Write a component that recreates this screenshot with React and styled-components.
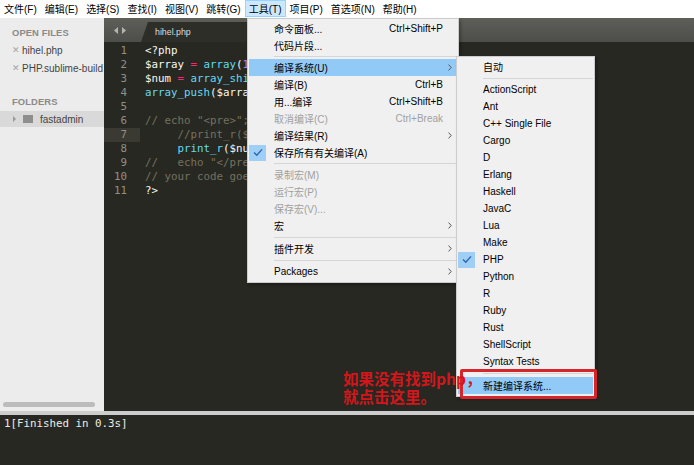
import React from 'react';
import styled, { createGlobalStyle, css } from 'styled-components';

const Global = createGlobalStyle`
  html, body { margin: 0; padding: 0; background: #272822; }
  body {
    width: 694px; height: 465px; overflow: hidden;
    font-family: "Liberation Sans", "Noto Sans CJK SC", sans-serif;
  }
`;

const UI = `"Liberation Sans", "Noto Sans CJK SC", sans-serif`;
const MONO = `"DejaVu Sans Mono", "Liberation Mono", monospace`;

const Window = styled.div`
  position: relative;
  width: 694px;
  height: 465px;
  display: flex;
  flex-direction: column;
  overflow: hidden;
  background: #272822;
`;

/* ---------- menu bar ---------- */
const MenuBar = styled.div`
  height: 18px;
  flex: none;
  background: #ffffff;
  display: flex;
  align-items: flex-start;
  font-family: ${UI};
  font-size: 10px;
  color: #000;
`;
const MenuBarItem = styled.div`
  height: 17px;
  box-sizing: border-box;
  padding: 0 3px;
  border: 1px solid transparent;
  display: flex;
  align-items: center;
  white-space: nowrap;
  ${p => p.$active && css`
    background: #cce8ff;
    border-color: #99d1ff;
  `}
`;

/* ---------- main ---------- */
const Main = styled.div`
  height: 393px;
  flex: none;
  display: flex;
`;

const Sidebar = styled.div`
  width: 104px;
  flex: none;
  background: #ececec;
  display: flex;
  flex-direction: column;
  font-family: ${UI};
  font-size: 10px;
  color: #444;
`;
const SectionTitle = styled.div`
  height: 16px;
  line-height: 16px;
  margin-top: ${p => p.$mt}px;
  padding-left: 12px;
  font-size: 9.4px;
  font-weight: bold;
  color: #8a8a8a;
  letter-spacing: 0.1px;
`;
const FileRow = styled.div`
  height: 18px;
  display: flex;
  align-items: center;
  padding-left: 12px;
  white-space: nowrap;
`;
const CloseX = styled.span`
  width: 10px;
  color: #a5a5a5;
  font-size: 9px;
`;
const FolderRow = styled.div`
  height: 16px;
  margin-top: 1px;
  background: #d9d9d9;
  display: flex;
  align-items: center;
  padding-left: 12px;
`;
const FolderName = styled.span`
  margin-left: 7px;
  color: #444;
`;
const SideScroll = styled.div`
  margin: auto 9px 4px 3px;
  height: 5px;
  border-radius: 3px;
  background: #bcbcbc;
`;

const Editor = styled.div`
  flex: 1;
  display: flex;
  flex-direction: column;
  background: #272822;
`;
const TabBar = styled.div`
  height: 24px;
  flex: none;
  background: linear-gradient(#5f5f5a, #4d4d49);
  display: flex;
  align-items: flex-end;
`;
const TabArrows = styled.div`
  width: 37px;
  height: 24px;
  display: flex;
  align-items: center;
  justify-content: center;
  gap: 4px;
  padding-right: 6px;
  box-sizing: border-box;
`;
const Tab = styled.div`
  width: 118px;
  height: 20px;
  background: #2d2e28;
  clip-path: polygon(7px 0, 111px 0, 118px 100%, 0 100%);
  display: flex;
  align-items: center;
  padding-left: 14px;
  box-sizing: border-box;
  font-family: ${UI};
  font-size: 8.8px;
  color: #dcdcdc;
`;
const Code = styled.div`
  flex: 1;
  padding-top: 2px;
  font-family: ${MONO};
  font-size: 10.8px;
`;
const Line = styled.div`
  height: 14px;
  line-height: 14px;
  display: flex;
`;
const Gutter = styled.div`
  width: 36px;
  flex: none;
  box-sizing: border-box;
  padding-right: 13px;
  text-align: right;
  color: #8f908a;
  background: ${p => (p.$active ? '#3a3a33' : 'transparent')};
`;
const CodeText = styled.div`
  padding-left: 5px;
  white-space: pre;
  color: #f8f8f2;
`;
const Tok = styled.span`
  color: ${p => ({ k: '#f92672', f: '#66d9ef', n: '#ae81ff', c: '#75715e', s: '#e6db74' }[p.$t] || '#f8f8f2')};
`;

const Splitter = styled.div`
  height: 4px;
  flex: none;
  background: #cdcdcd;
`;
const Output = styled.div`
  flex: 1;
  background: #272822;
  padding: 2px 4px;
  font-family: ${MONO};
  font-size: 10.8px;
  line-height: 14px;
  color: #ecece6;
  white-space: pre;
`;

/* ---------- menus (overlays) ---------- */
const Menu = styled.div`
  position: absolute;
  left: ${p => p.$left}px;
  top: ${p => p.$top}px;
  width: ${p => p.$width}px;
  box-sizing: border-box;
  padding: ${p => p.$pt}px 1px 2px 1px;
  background: #f0f0f0;
  border: 1px solid #cccccc;
  box-shadow: 2px 2px 3px rgba(0, 0, 0, 0.28);
  font-family: ${UI};
  font-size: 10px;
  color: #000;
  z-index: ${p => p.$z};
`;
const Item = styled.div`
  height: 17px;
  display: grid;
  grid-template-columns: 25px 1fr auto 14px;
  align-items: center;
  white-space: nowrap;
  color: ${p => (p.$disabled ? '#a0a0a0' : '#000')};
  background: ${p => (p.$hl ? '#91c9f7' : 'transparent')};
`;
const CheckCell = styled.div`
  height: 17px;
  display: flex;
  align-items: center;
`;
const CheckBox = styled.div`
  width: 17px;
  height: 16px;
  background: #9fcff5;
  display: flex;
  align-items: center;
  justify-content: center;
`;
const Shortcut = styled.div`
  text-align: right;
`;
const ArrowCell = styled.div`
  display: flex;
  align-items: center;
  padding-left: 5px;
`;
const Sep = styled.div`
  height: ${p => p.$h}px;
  display: flex;
  align-items: center;
  padding-left: 25px;
  &::after {
    content: '';
    flex: 1;
    height: 1px;
    background: #d5d5d5;
  }
`;

const Annotation = styled.div`
  position: absolute;
  left: 343px;
  top: 369px;
  font-family: "Noto Sans CJK SC", sans-serif;
  font-weight: bold;
  font-size: 15.5px;
  line-height: 18px;
  color: #d3161b;
  white-space: pre;
  z-index: 10;
`;
const RedBox = styled.div`
  position: absolute;
  left: 460px;
  top: 369px;
  width: 137px;
  height: 30px;
  box-sizing: border-box;
  border: 3px solid #d6262b;
  border-radius: 2px;
  z-index: 9;
`;

const Check = () => (
  <CheckBox>
    <svg width="10" height="9" viewBox="0 0 10 9">
      <path d="M1 4.6 L3.8 7.3 L9 1.4" fill="none" stroke="#2a66b8" strokeWidth="1.4" />
    </svg>
  </CheckBox>
);

const Chevron = () => (
  <svg width="4" height="7" viewBox="0 0 4 7">
    <path d="M0.6 0.6 L3.2 3.5 L0.6 6.4" fill="none" stroke="#555" strokeWidth="1" />
  </svg>
);

const MenuItem = ({ label, shortcut, sub, checked, disabled, hl }) => (
  <Item $disabled={disabled} $hl={hl}>
    <CheckCell>{checked && <Check />}</CheckCell>
    <div>{label}</div>
    <Shortcut>{shortcut}</Shortcut>
    <ArrowCell>{sub && <Chevron />}</ArrowCell>
  </Item>
);

const menuBarItems = ['文件(F)', '编辑(E)', '选择(S)', '查找(I)', '视图(V)', '跳转(G)', '工具(T)', '项目(P)', '首选项(N)', '帮助(H)'];

/* only the part of each line that is visible left of the open menu */
const codeLines = [
  [['t', '<?php']],
  [['t', '$array '], ['k', '='], ['t', ' '], ['f', 'array'], ['t', '('], ['n', '1']],
  [['t', '$num '], ['k', '='], ['t', ' '], ['f', 'array_shi']],
  [['f', 'array_push'], ['t', '($arra']],
  [],
  [['c', '// echo "<pre>";']],
  [['c', '     //print_r($']],
  [['t', '     '], ['f', 'print_r'], ['t', '($nu']],
  [['c', '//   echo "</pre']],
  [['c', '// your code goe']],
  [['t', '?>']],
];

const toolsMenu = [
  { label: '命令面板...', shortcut: 'Ctrl+Shift+P' },
  { label: '代码片段...' },
  { sep: 5 },
  { label: '编译系统(U)', sub: true, hl: true },
  { label: '编译(B)', shortcut: 'Ctrl+B' },
  { label: '用...编译', shortcut: 'Ctrl+Shift+B' },
  { label: '取消编译(C)', shortcut: 'Ctrl+Break', disabled: true },
  { label: '编译结果(R)', sub: true },
  { label: '保存所有有关编译(A)', checked: true },
  { sep: 5 },
  { label: '录制宏(M)', disabled: true },
  { label: '运行宏(P)', disabled: true },
  { label: '保存宏(V)...', disabled: true },
  { label: '宏', sub: true },
  { sep: 6 },
  { label: '插件开发', sub: true },
  { sep: 6 },
  { label: 'Packages', sub: true },
];

const buildMenu = [
  { label: '自动' },
  { sep: 6 },
  ...['ActionScript', 'Ant', 'C++ Single File', 'Cargo', 'D', 'Erlang', 'Haskell', 'JavaC', 'Lua', 'Make'].map(l => ({ label: l })),
  { label: 'PHP', checked: true },
  ...['Python', 'R', 'Ruby', 'Rust', 'ShellScript', 'Syntax Tests'].map(l => ({ label: l })),
  { sep: 7 },
  { label: '新建编译系统...', hl: true },
];

const renderMenu = items =>
  items.map((it, i) => (it.sep ? <Sep key={i} $h={it.sep} /> : <MenuItem key={i} {...it} />));

export default function App() {
  return (
    <>
      <Global />
      <Window>
        <MenuBar>
          {menuBarItems.map(m => (
            <MenuBarItem key={m} $active={m === '工具(T)'}>{m}</MenuBarItem>
          ))}
        </MenuBar>

        <Main>
          <Sidebar>
            <SectionTitle $mt={7}>OPEN FILES</SectionTitle>
            <FileRow><CloseX>✕</CloseX>hihel.php</FileRow>
            <FileRow><CloseX>✕</CloseX>PHP.sublime-build</FileRow>
            <SectionTitle $mt={17}>FOLDERS</SectionTitle>
            <FolderRow>
              <svg width="11" height="8" viewBox="0 0 11 8">
                <path d="M1 1 L4 4 L1 7 Z" fill="#9a9a9a" />
              </svg>
              <svg width="10" height="8" viewBox="0 0 10 8">
                <rect x="0" y="0" width="10" height="8" fill="#8e8e8e" />
              </svg>
              <FolderName>fastadmin</FolderName>
            </FolderRow>
            <SideScroll />
          </Sidebar>

          <Editor>
            <TabBar>
              <TabArrows>
                <svg width="4" height="7" viewBox="0 0 4 7"><path d="M4 0 L0 3.5 L4 7 Z" fill="#b5b5b0" /></svg>
                <svg width="4" height="7" viewBox="0 0 4 7"><path d="M0 0 L4 3.5 L0 7 Z" fill="#b5b5b0" /></svg>
              </TabArrows>
              <Tab>hihel.php</Tab>
            </TabBar>
            <Code>
              {codeLines.map((toks, i) => (
                <Line key={i}>
                  <Gutter $active={i === 6}>{i + 1}</Gutter>
                  <CodeText>
                    {toks.map(([t, s], j) => <Tok key={j} $t={t}>{s}</Tok>)}
                  </CodeText>
                </Line>
              ))}
            </Code>
          </Editor>
        </Main>

        <Splitter />
        <Output>1[Finished in 0.3s]</Output>

        <Menu $left={247} $top={18} $width={212} $pt={1} $z={5}>
          {renderMenu(toolsMenu)}
        </Menu>
        <Menu $left={456} $top={56} $width={139} $pt={1} $z={6}>
          {renderMenu(buildMenu)}
        </Menu>

        <RedBox />
        <Annotation>{'如果没有找到php，\n就点击这里。'}</Annotation>
      </Window>
    </>
  );
}
